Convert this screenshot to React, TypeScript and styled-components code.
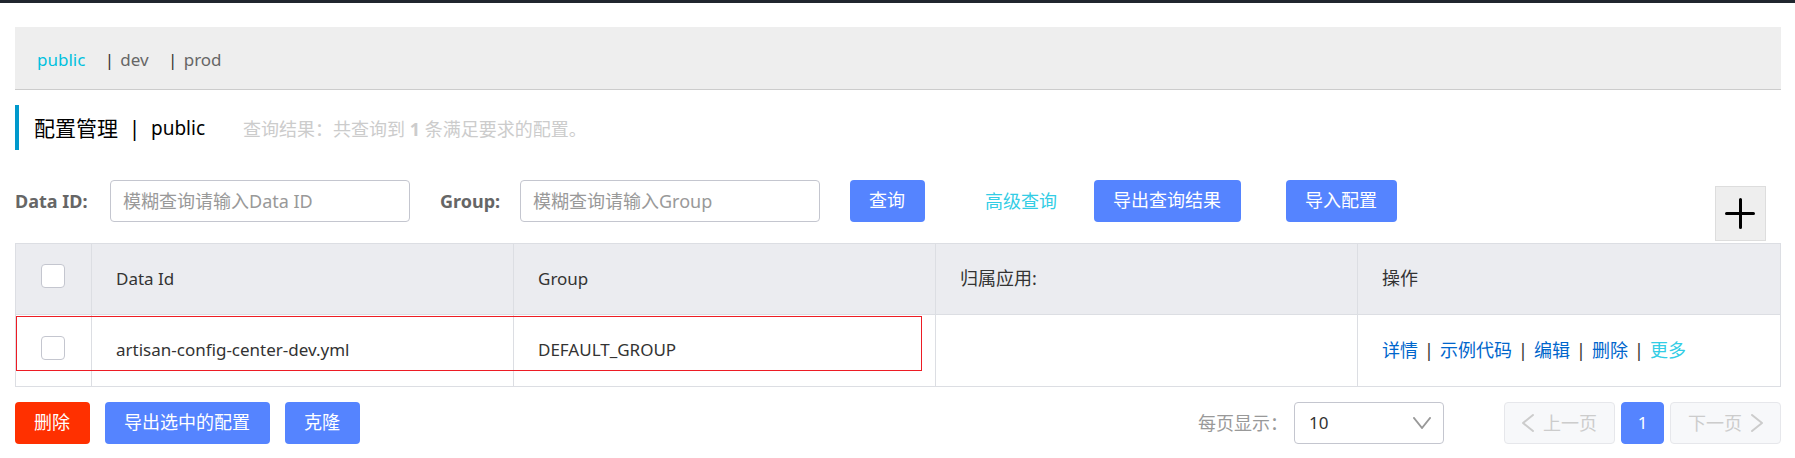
import React from 'react';
import styled, { createGlobalStyle } from 'styled-components';

const GlobalStyle = createGlobalStyle`
  * { box-sizing: border-box; }
  body {
    margin: 0;
    background: #fff;
    color: #333;
    font: 18px/24px "Noto Sans", "Noto Sans CJK SC", sans-serif;
  }
  button, input, select { font: inherit; margin: 0; }
  a { text-decoration: none; }
`;

const TopLine = styled.div`
  height: 3px;
  background: #20262e;
`;

const Page = styled.main`
  padding: 24px 14px 14px 15px;
`;

const NamespaceBar = styled.nav`
  display: flex;
  align-items: center;
  height: 63px;
  padding: 4px 22px 0;
  background: #eee;
  border-bottom: 1px solid #ccc;
  font-size: 17px;
`;

const NamespaceLink = styled.a<{ $active?: boolean }>`
  margin-right: 13px;
  color: ${(p) => (p.$active ? '#00c1de' : '#666')};
`;

const Bar = styled.span<{ $width: number }>`
  display: inline-block;
  width: ${(p) => p.$width}px;
  text-align: center;
  color: ${(p) => (p.color ? p.color : '#333')};
`;

const TitleRow = styled.header`
  display: flex;
  align-items: center;
  height: 45px;
  margin: 15px 0 30px;
  padding-left: 15px;
  border-left: 4px solid #09c;
`;

const Title = styled.h1`
  display: flex;
  margin: 0;
  color: #000;
  font-size: 21px;
  font-weight: 400;
`;

const TitleName = styled.span`
  font-size: 19px;
`;

const ResultNote = styled.span`
  margin-left: 38px;
  padding-top: 2px;
  color: #ccc;
`;

const SearchForm = styled.form`
  display: flex;
  align-items: flex-start;
  margin-bottom: 2px;
`;

const FieldLabel = styled.label<{ $width: number }>`
  width: ${(p) => p.$width}px;
  color: #666;
  font-weight: 700;
  line-height: 42px;
  white-space: nowrap;
`;

const TextField = styled.input`
  width: 300px;
  height: 42px;
  margin-right: 30px;
  padding: 0 12px;
  border: 1px solid #c4c6cf;
  border-radius: 4px;
  background: #fff;
  color: #333;
  &::placeholder { color: #999; opacity: 1; }
`;

const Button = styled.button<{ $danger?: boolean }>`
  height: 42px;
  padding: 0 20px 2px 19px;
  border: 0;
  border-radius: 4px;
  background: ${(p) => (p.$danger ? '#ff3000' : '#5584ff')};
  color: #fff;
  white-space: nowrap;
`;

const AdvancedLink = styled.a`
  margin: 0 37px 0 60px;
  color: #33cde5;
  line-height: 42px;
`;

const ImportButton = styled(Button)`
  margin-left: 45px;
`;

const AddButton = styled.button`
  display: grid;
  place-items: center;
  width: 51px;
  height: 55px;
  margin: 6px 15px 0 auto;
  padding: 0 2px 2px 0;
  border: 1px solid #ddd;
  background: #eee;
`;

const TableWrap = styled.div`
  position: relative;
  margin-bottom: 15px;
`;

const Table = styled.table`
  width: 100%;
  table-layout: fixed;
  border: 1px solid #dcdee3;
  border-spacing: 0;
`;

const HeadCell = styled.th<{ $check?: boolean }>`
  width: ${(p) => (p.$check ? '76px' : 'auto')};
  height: 71px;
  padding: 0 ${(p) => (p.$check ? 25 : 24)}px 2px;
  border-right: 1px solid #dcdee3;
  border-bottom: 1px solid #dcdee3;
  background: #ebecf0;
  font-weight: 400;
  text-align: left;
  &:last-child { border-right: 0; }
`;

const Cell = styled.td<{ $check?: boolean }>`
  height: 71px;
  padding: 0 ${(p) => (p.$check ? 25 : 24)}px 2px;
  border-right: 1px solid #dcdee3;
  white-space: nowrap;
  &:last-child { border-right: 0; }
`;

const Latin = styled.span`
  font-size: 17px;
`;

const Checkbox = styled.input`
  display: block;
  appearance: none;
  width: 24px;
  height: 24px;
  margin: 0 0 4px;
  border: 1px solid #c4c6cf;
  border-radius: 4px;
  background: #fff;
`;

const RowLink = styled.a<{ $light?: boolean }>`
  color: ${(p) => (p.$light ? '#33cde5' : '#06c')};
`;

const RowMarker = styled.div`
  position: absolute;
  top: 73px;
  left: 1px;
  width: calc(50% + 23px);
  height: 55px;
  border: 1px solid #ed1c24;
  pointer-events: none;
`;

const Footer = styled.footer`
  display: flex;
  align-items: center;
  justify-content: space-between;
`;

const Actions = styled.div`
  display: flex;
  gap: 15px;
`;

const Pager = styled.div`
  display: flex;
  align-items: center;
`;

const SizeLabel = styled.label`
  width: 96px;
  color: #999;
`;

const SelectBox = styled.div`
  position: relative;
  width: 150px;
  margin-right: 60px;
  svg { position: absolute; top: 15px; right: 13px; pointer-events: none; }
`;

const Select = styled.select`
  display: block;
  appearance: none;
  width: 100%;
  height: 42px;
  padding: 0 14px;
  border: 1px solid #c4c6cf;
  border-radius: 4px;
  background: #fff;
  color: #333;
  font-size: 17px;
`;

const PageButton = styled.button`
  display: flex;
  align-items: center;
  justify-content: center;
  gap: 9px;
  width: 111px;
  height: 42px;
  padding: 0;
  border: 1px solid #e6e7eb;
  border-radius: 4px;
  background: #f7f8fa;
  color: #ccc;
`;

const CurrentPage = styled(PageButton)`
  width: 43px;
  margin: 0 6px;
  border-color: #5584ff;
  background: #5584ff;
  color: #fff;
  font-size: 17px;
`;

const Chevron = ({ points, width, height, color }: { points: string; width: number; height: number; color: string }) => (
  <svg width={width} height={height} fill="none" stroke={color} strokeWidth="2" strokeLinecap="round" strokeLinejoin="round" aria-hidden="true">
    <polyline points={points} />
  </svg>
);

export default function App() {
  return (
    <>
      <GlobalStyle />
      <TopLine />
      <Page>
        <NamespaceBar>
          <NamespaceLink href="#public" $active>public</NamespaceLink>
          <Bar $width={22}>|</Bar>
          <NamespaceLink href="#dev">dev</NamespaceLink>
          <Bar $width={22}>|</Bar>
          <NamespaceLink href="#prod">prod</NamespaceLink>
        </NamespaceBar>

        <TitleRow>
          <Title>
            配置管理<Bar $width={33} color="#000">|</Bar><TitleName>public</TitleName>
          </Title>
          <ResultNote>查询结果：共查询到 <strong>1</strong> 条满足要求的配置。</ResultNote>
        </TitleRow>

        <SearchForm onSubmit={(e) => e.preventDefault()}>
          <FieldLabel htmlFor="dataId" $width={95}>Data ID:</FieldLabel>
          <TextField id="dataId" placeholder="模糊查询请输入Data ID" />
          <FieldLabel htmlFor="group" $width={80}>Group:</FieldLabel>
          <TextField id="group" placeholder="模糊查询请输入Group" />
          <Button>查询</Button>
          <AdvancedLink href="#advanced">高级查询</AdvancedLink>
          <Button type="button">导出查询结果</Button>
          <ImportButton type="button">导入配置</ImportButton>
          <AddButton type="button" aria-label="新建配置">
            <svg width="32" height="32" stroke="#000" strokeWidth="3" strokeLinecap="round" aria-hidden="true">
              <path d="M2.5 16.5H29.5M16.5 2.5V30.5" />
            </svg>
          </AddButton>
        </SearchForm>

        <TableWrap>
          <Table>
            <thead>
              <tr>
                <HeadCell $check><Checkbox type="checkbox" aria-label="全选" /></HeadCell>
                <HeadCell><Latin>Data Id</Latin></HeadCell>
                <HeadCell><Latin>Group</Latin></HeadCell>
                <HeadCell>归属应用:</HeadCell>
                <HeadCell>操作</HeadCell>
              </tr>
            </thead>
            <tbody>
              <tr>
                <Cell $check><Checkbox type="checkbox" aria-label="artisan-config-center-dev.yml" /></Cell>
                <Cell><Latin>artisan-config-center-dev.yml</Latin></Cell>
                <Cell><Latin>DEFAULT_GROUP</Latin></Cell>
                <Cell />
                <Cell>
                  <RowLink href="#detail">详情</RowLink><Bar $width={22}>|</Bar>
                  <RowLink href="#code">示例代码</RowLink><Bar $width={22}>|</Bar>
                  <RowLink href="#edit">编辑</RowLink><Bar $width={22}>|</Bar>
                  <RowLink href="#delete">删除</RowLink><Bar $width={22}>|</Bar>
                  <RowLink href="#more" $light>更多</RowLink>
                </Cell>
              </tr>
            </tbody>
          </Table>
          <RowMarker />
        </TableWrap>

        <Footer>
          <Actions>
            <Button $danger>删除</Button>
            <Button>导出选中的配置</Button>
            <Button>克隆</Button>
          </Actions>
          <Pager>
            <SizeLabel htmlFor="pageSize">每页显示：</SizeLabel>
            <SelectBox>
              <Select id="pageSize" defaultValue="10">
                <option>10</option>
                <option>20</option>
                <option>50</option>
              </Select>
              <Chevron width={18} height={12} points="1,1 9,11 17,1" color="#999" />
            </SelectBox>
            <PageButton disabled>
              <Chevron width={12} height={18} points="11,1 1,9 11,17" color="#ccc" />
              上一页
            </PageButton>
            <CurrentPage>1</CurrentPage>
            <PageButton disabled>
              下一页
              <Chevron width={12} height={18} points="1,1 11,9 1,17" color="#ccc" />
            </PageButton>
          </Pager>
        </Footer>
      </Page>
    </>
  );
}
